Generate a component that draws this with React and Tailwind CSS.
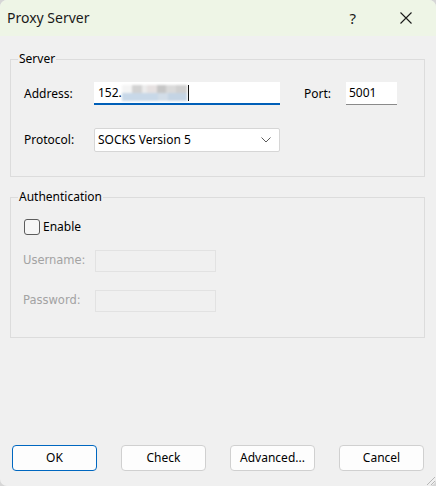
import React from 'react';

const font = { fontFamily: '"Noto Sans", "Open Sans", sans-serif' };
const dimFont = { fontFamily: '"DejaVu Sans", sans-serif', fontSize: '11.5px' };

const Btn = ({ children, primary }) => (
  <button
    className={
      primary
        ? 'w-[85px] h-[26px] rounded-[4px] border border-[#0067c0] bg-[#fdfdfd] text-[12px] text-black'
        : 'w-[85px] h-[26px] rounded-[4px] border border-[#d0d0d0] bg-[#fdfdfd] text-[12px] text-black'
    }
  >
    {children}
  </button>
);

const Blurred = () => (
  <span className="inline-flex flex-col w-[65px] h-[16px] align-middle blur-[1px]">
    <span className="flex h-[8px]">
      <span className="w-[10px] bg-[#f4f4f4]" />
      <span className="w-[10px] bg-[#d2d2d2]" />
      <span className="w-[5px] bg-[#ececec]" />
      <span className="w-[10px] bg-[#e6e1e1]" />
      <span className="w-[9px] bg-[#c6c6c6]" />
      <span className="w-[10px] bg-[#dadada]" />
      <span className="w-[11px] bg-[#d0d0d0]" />
    </span>
    <span className="flex h-[8px]">
      <span className="w-[36px] bg-[#c8d8e8]" />
      <span className="w-[10px] bg-[#d2dde8]" />
      <span className="w-[19px] bg-[#c4d4e4]" />
    </span>
  </span>
);

export default function App() {
  return (
    <div className="w-[436px] h-[486px] bg-[#d6d6d6]" style={font}>
      <div className="relative w-[436px] h-[486px] rounded-[7px] overflow-hidden bg-[#f0f0f0] flex flex-col">
        {/* title bar */}
        <div className="h-[36px] bg-[#eef5e6] flex items-center pl-[7px] shrink-0">
          <span className="text-[14px] text-[#1a1a1a] -mt-[1px]">Proxy Server</span>
          <span className="ml-auto text-[15px] text-[#1a1a1a] mr-[44px]">?</span>
          <svg width="12" height="12" viewBox="0 0 12 12" className="mr-[24px]">
            <path d="M0.5 0.5 L11.5 11.5 M11.5 0.5 L0.5 11.5" stroke="#1a1a1a" strokeWidth="1.1" />
          </svg>
        </div>

        <div className="px-[10px] pr-[11px]">
          {/* Server group */}
          <fieldset className="mt-[15px] border border-[#dcdcdc]">
            <legend className="ml-[7px] px-[1px] text-[12px] leading-[16px] text-black">Server</legend>
            <div className="pl-[13px] pt-[15px] pb-[24px]">
              <div className="flex items-center h-[23px]">
                <span className="w-[70px] text-[12px] text-black">Address:</span>
                <div className="w-[186px] h-[23px] bg-white border-b-2 border-[#005fb8] flex items-center pl-[4px] text-[12px] text-black">
                  <span>152.</span>
                  <Blurred />
                  <span className="w-[1px] h-[16px] bg-black ml-[1px]" />
                </div>
                <span className="ml-[24px] w-[42px] text-[12px] text-black">Port:</span>
                <div className="w-[51px] h-[23px] bg-white border-b border-[#8a8a8a] flex items-center pl-[3px] text-[12px] text-black">
                  5001
                </div>
              </div>
              <div className="flex items-center h-[24px] mt-[23px]">
                <span className="w-[70px] text-[12px] text-black">Protocol:</span>
                <div className="w-[186px] h-[24px] bg-white border border-[#d6d6d6] rounded-[2px] flex items-center pl-[3px] pr-[8px] text-[12px] text-black">
                  <span>SOCKS Version 5</span>
                  <svg width="10" height="6" viewBox="0 0 10 6" className="ml-auto">
                    <path d="M0.5 0.5 L5 5 L9.5 0.5" fill="none" stroke="#5a5a5a" strokeWidth="1" />
                  </svg>
                </div>
              </div>
            </div>
          </fieldset>

          {/* Authentication group */}
          <fieldset className="mt-[12px] border border-[#dcdcdc]">
            <legend className="ml-[7px] px-[1px] text-[12px] leading-[16px] text-black">Authentication</legend>
            <div className="pl-[13px] pt-[14px] pb-[25px]">
              <div className="flex items-center h-[16px]">
                <span className="w-[16px] h-[16px] rounded-[3px] border border-[#5c5c5c] bg-[#f6f6f6]" />
                <span className="ml-[3px] text-[12px] text-black">Enable</span>
              </div>
              <div className="flex items-center h-[22px] mt-[15px]">
                <span className="w-[72px] -ml-[1px] text-[#a3a3a3]" style={dimFont}>Username:</span>
                <div className="w-[121px] h-[22px] border border-[#e2e2e2] bg-[#f0f0f0]" />
              </div>
              <div className="flex items-center h-[22px] mt-[18px]">
                <span className="w-[72px] -ml-[1px] text-[#a3a3a3]" style={dimFont}>Password:</span>
                <div className="w-[121px] h-[22px] border border-[#e2e2e2] bg-[#f0f0f0]" />
              </div>
            </div>
          </fieldset>
        </div>

        {/* buttons */}
        <div className="mt-auto flex justify-between px-[12px] pb-[15px]">
          <Btn primary>OK</Btn>
          <Btn>Check</Btn>
          <Btn>Advanced...</Btn>
          <Btn>Cancel</Btn>
        </div>

        <svg width="12" height="12" viewBox="0 0 12 12" className="absolute right-0 bottom-0">
          <path d="M11 3 L3 11 M11 7 L7 11" stroke="#b8b8b8" strokeWidth="1" />
        </svg>
      </div>
    </div>
  );
}
